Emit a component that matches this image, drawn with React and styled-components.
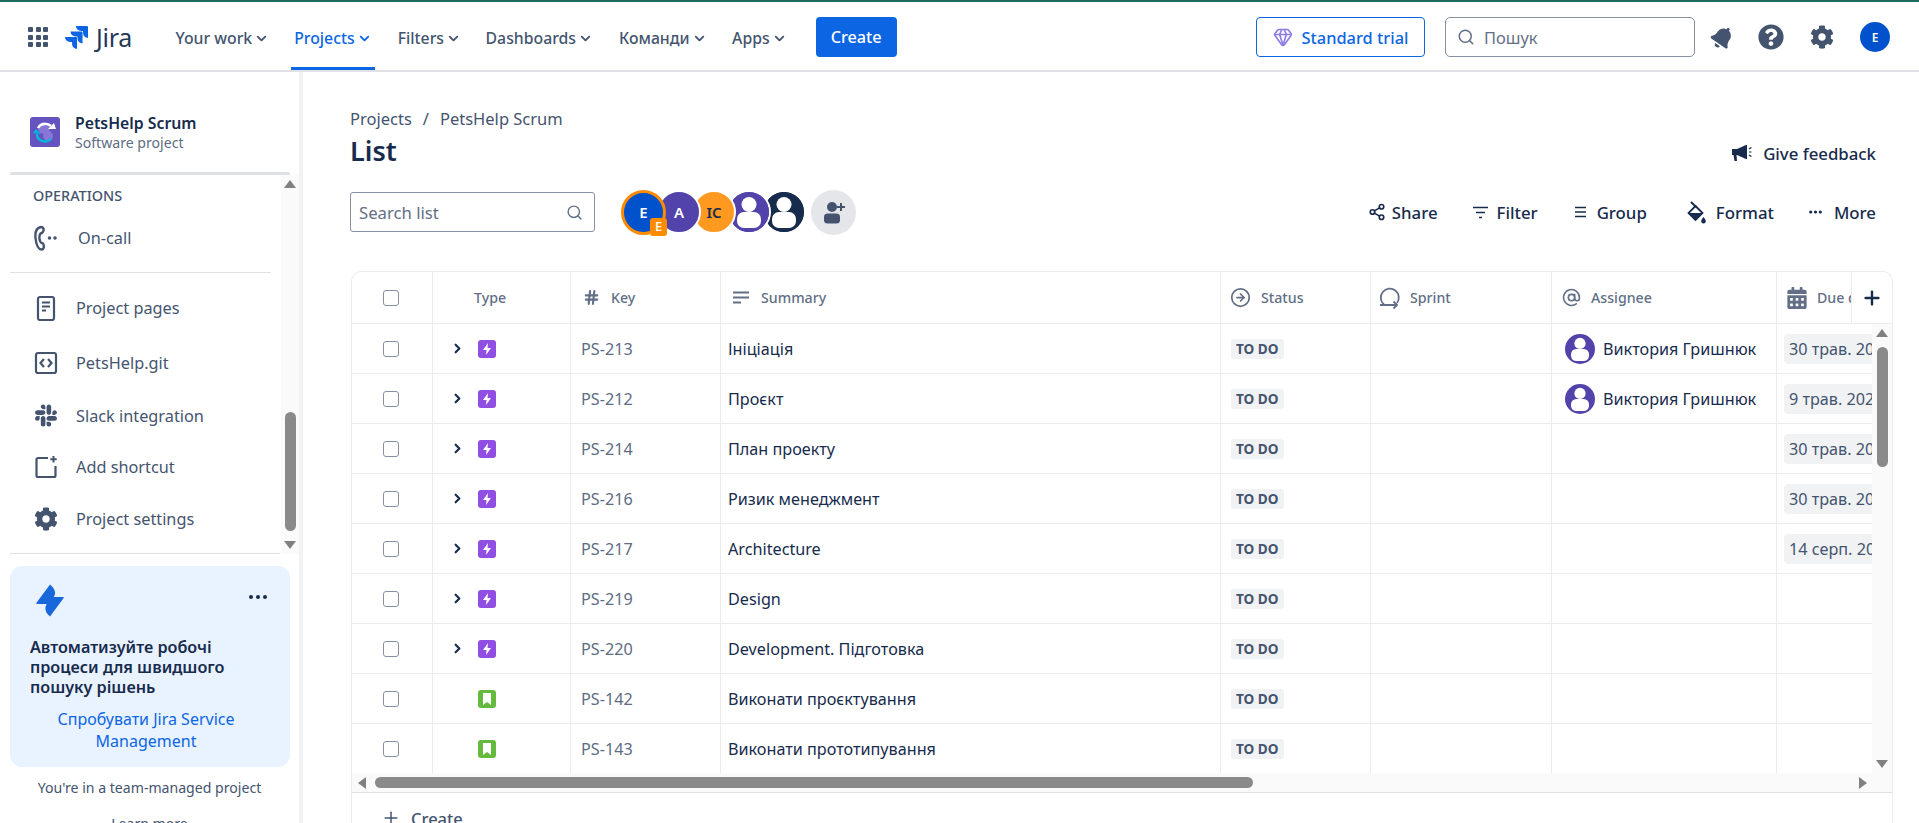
import React from 'react'
import styled, { createGlobalStyle } from 'styled-components'
import { Search, Plus, ChevronDown, ChevronRight, Share2, Hash, AtSign, CircleArrowRight, Gem } from 'lucide-react'
import { FaBell, FaQuestionCircle, FaCog, FaSlack, FaCalendarAlt } from 'react-icons/fa'
import { SiJira } from 'react-icons/si'

const GlobalStyle = createGlobalStyle`
  html, body {
    margin: 0;
    padding: 0;
    height: 100%;
    overflow: hidden;
    background: #fff;
  }
  * { box-sizing: border-box; }
  body {
    font-family: "Noto Sans", "Open Sans", sans-serif;
    font-size: 15px;
    color: #172b4d;
  }
`

const Page = styled.div`
  width: 1919px;
  height: 823px;
  overflow: hidden;
  display: flex;
  flex-direction: column;
  border-top: 2px solid #1f6b5e;
`

/* ---------- top bar ---------- */

const TopBar = styled.header`
  height: 70px;
  flex: none;
  display: flex;
  align-items: center;
  padding: 2px 0 0 28px;
  border-bottom: 2px solid #dfe1e6;
`

const AppGrid = styled.div`
  width: 20px;
  display: grid;
  grid-template-columns: repeat(3, 5px);
  gap: 2.5px;
  margin-right: 17px;
  span {
    height: 5px;
    background: #44546f;
    border-radius: 1px;
  }
`

const Logo = styled.div`
  display: flex;
  align-items: center;
  gap: 8px;
  width: 107.5px;
  color: #0c66e4;
  span {
    color: #253858;
    font-size: 25px;
    font-weight: 400;
    letter-spacing: -0.3px;
  }
`

const NavList = styled.nav`
  display: flex;
  align-self: flex-start;
  margin-top: -2px;
`

const NavItem = styled.div`
  display: flex;
  align-items: center;
  gap: 2px;
  height: 68px;
  padding: 7px 3px 0;
  margin-right: ${(p) => p.$gap}px;
  font-size: 15.8px;
  font-weight: 500;
  color: ${(p) => (p.$active ? '#0c66e4' : '#44546f')};
  border-bottom: 3px solid ${(p) => (p.$active ? '#0c66e4' : 'transparent')};
  svg { margin-top: 1px; }
`

const CreateButton = styled.button`
  width: 81px;
  height: 40px;
  margin-left: 26px;
  border: none;
  border-radius: 4px;
  background: #0c66e4;
  color: #fff;
  font: 500 16.2px "Noto Sans", sans-serif;
`

const TopRight = styled.div`
  margin-left: auto;
  display: flex;
  align-items: center;
  padding-right: 29px;
`

const TrialButton = styled.div`
  width: 169px;
  height: 40px;
  border: 1px solid #0c66e4;
  border-radius: 4px;
  display: flex;
  align-items: center;
  justify-content: center;
  gap: 9px;
  color: #0c66e4;
  font-size: 16.4px;
  font-weight: 500;
  svg { color: #8f7ee7; }
`

const TopSearch = styled.div`
  width: 250px;
  height: 40px;
  margin-left: 20px;
  border: 1px solid #8590a2;
  border-radius: 5px;
  display: flex;
  align-items: center;
  gap: 9px;
  padding-left: 11px;
  color: #626f86;
  font-size: 16.4px;
`

const TopIcons = styled.div`
  display: flex;
  align-items: center;
  color: #44546f;
  margin-left: 16px;
  gap: 26px;
`

const Bell = styled(FaBell)`
  transform: rotate(35deg);
  margin-right: -2px;
`

const UserDot = styled.div`
  width: 30px;
  height: 30px;
  border-radius: 50%;
  background: #0052cc;
  color: #fff;
  font-size: 12px;
  font-weight: 600;
  display: flex;
  align-items: center;
  justify-content: center;
`

/* ---------- body ---------- */

const Body = styled.div`
  flex: 1;
  display: flex;
  min-height: 0;
`

const Sidebar = styled.aside`
  width: 303px;
  flex: none;
  border-right: 4px solid #f1f2f4;
  display: flex;
  flex-direction: column;
  overflow: hidden;
`

const ProjectHead = styled.div`
  height: 100px;
  flex: none;
  padding: 45px 0 0 30px;
  display: flex;
  gap: 15px;
`

const ProjectTitle = styled.div`
  font-size: 15.8px;
  font-weight: 600;
  line-height: 20px;
  margin-top: -4px;
  color: #172b4d;
  small {
    display: block;
    font-size: 14.1px;
    font-weight: 400;
    line-height: 19px;
    color: #5e6c84;
  }
`

const TopRule = styled.div`
  height: 3px;
  flex: none;
  margin: 0 9px 0 10px;
  background: #dfe1e6;
  border-radius: 2px;
`

const ScrollArea = styled.div`
  height: 379px;
  flex: none;
  display: flex;
  margin-left: 10px;
`

const SideList = styled.div`
  flex: 1;
  margin-right: 10px;
`

const SectionLabel = styled.div`
  height: 40px;
  display: flex;
  align-items: center;
  padding-left: 23px;
  font-size: 14.4px;
  font-weight: 500;
  color: #44546f;
`

const SideItem = styled.div`
  height: ${(p) => p.$h}px;
  display: flex;
  align-items: center;
  padding-left: 24px;
  gap: ${(p) => p.$gap || 18}px;
  font-size: 16.3px;
  color: #44546f;
  svg { flex: none; width: 24px; }
`

const SideRule = styled.div`
  height: 1px;
  background: #dfe1e6;
  margin: 11px 0 7px;
`

const VScroll = styled.div`
  width: ${(p) => p.$w}px;
  flex: none;
  height: 100%;
  background: #fafafa;
  display: flex;
  flex-direction: column;
  align-items: center;
`

const VThumb = styled.div`
  width: 11px;
  height: ${(p) => p.$h}px;
  margin-top: ${(p) => p.$top}px;
  margin-bottom: auto;
  background: #8a8a8a;
  border-radius: 6px;
`

const ArrowUp = styled.div`
  flex: none;
  margin-top: ${(p) => p.$m || 5}px;
  width: 0;
  height: 0;
  border-left: 6px solid transparent;
  border-right: 6px solid transparent;
  border-bottom: 8px solid #808080;
`

const ArrowDown = styled.div`
  flex: none;
  margin-bottom: ${(p) => p.$m || 5}px;
  width: 0;
  height: 0;
  border-left: 6px solid transparent;
  border-right: 6px solid transparent;
  border-top: 8px solid #808080;
`

const SideBottomRule = styled.div`
  height: 1px;
  flex: none;
  background: #dfe1e6;
  margin: -1px 19px 12px 10px;
  position: relative;
`

const Promo = styled.div`
  height: 201px;
  flex: none;
  margin: 0 9px 0 10px;
  background: #e9f2ff;
  border-radius: 12px;
  padding: 18px 10px 0 20px;
`

const PromoTop = styled.div`
  display: flex;
  align-items: flex-start;
  justify-content: space-between;
  height: 53px;
  padding-left: 6px;
`

const PromoDots = styled.div`
  display: flex;
  gap: 3px;
  margin: 11px 13px 0 0;
  span {
    width: 4px;
    height: 4px;
    border-radius: 50%;
    background: #172b4d;
  }
`

const PromoHeading = styled.div`
  font-size: 16.2px;
  font-weight: 600;
  line-height: 20px;
  color: #172b4d;
  white-space: nowrap;
`

const PromoLink = styled.div`
  margin-top: 11px;
  padding-right: 18px;
  font-size: 16px;
  line-height: 22px;
  text-align: center;
  color: #0c66e4;
`

const TeamNote = styled.div`
  text-align: center;
  font-size: 14.1px;
  color: #44546f;
  margin: 11px 10px 0 10px;
  line-height: 20px;
  small {
    display: block;
    font-size: 14.1px;
    margin-top: 16px;
  }
`

/* ---------- main ---------- */

const Main = styled.main`
  flex: 1;
  min-width: 0;
  padding: 36px 26px 0 47px;
  display: flex;
  flex-direction: column;
`

const Crumbs = styled.div`
  height: 20px;
  flex: none;
  display: flex;
  align-items: center;
  gap: 11px;
  font-size: 16.5px;
  color: #44546f;
`

const TitleRow = styled.div`
  height: 36px;
  flex: none;
  margin-top: 7px;
  display: flex;
  align-items: center;
  justify-content: space-between;
  padding-right: 17px;
  h1 {
    margin: -6px 0 0;
    font-size: 27px;
    font-weight: 600;
    color: #172b4d;
  }
`

const Action = styled.div`
  display: flex;
  align-items: center;
  gap: ${(p) => p.$gap || 9}px;
  margin-left: ${(p) => p.$left || 0}px;
  font-size: 16.8px;
  font-weight: 500;
  color: #172b4d;
`

const Toolbar = styled.div`
  height: 46px;
  flex: none;
  margin-top: 18px;
  display: flex;
  align-items: center;
  padding-right: 17px;
`

const ListSearch = styled.div`
  width: 245px;
  height: 40px;
  border: 1px solid #8590a2;
  border-radius: 3px;
  display: flex;
  align-items: center;
  justify-content: space-between;
  padding: 0 11px 0 8px;
  font-size: 16.7px;
  color: #626f86;
`

const AvatarRow = styled.div`
  display: flex;
  align-items: center;
  margin-left: 26px;
`

const Avatar = styled.div`
  width: ${(p) => (p.$me ? 45 : 44)}px;
  height: ${(p) => (p.$me ? 45 : 44)}px;
  margin-left: ${(p) => (p.$me ? 0 : -9)}px;
  border-radius: 50%;
  border: ${(p) => (p.$me ? '3px solid #ff8b00' : '2px solid #fff')};
  background: ${(p) => p.$bg};
  color: ${(p) => p.$fg || '#fff'};
  z-index: ${(p) => p.$z};
  position: relative;
  display: flex;
  align-items: center;
  justify-content: center;
  overflow: ${(p) => (p.$me ? 'visible' : 'hidden')};
  font-size: 15px;
  font-weight: 600;
  line-height: 1;
`

const MeBadge = styled.span`
  position: absolute;
  right: -4px;
  bottom: -4px;
  width: 17px;
  height: 18px;
  border-radius: 3px;
  background: #ff8b00;
  color: #fff;
  font-size: 13px;
  font-weight: 500;
  display: flex;
  align-items: center;
  justify-content: center;
`

const AddPeople = styled.div`
  width: 45px;
  height: 45px;
  margin-left: 5px;
  border-radius: 50%;
  background: #e4e6ea;
  display: flex;
  align-items: center;
  justify-content: center;
`

const Actions = styled.div`
  margin-left: auto;
  display: flex;
  align-items: center;
`

/* ---------- table ---------- */

const columns = '81px 138px 150px 500px 150px 181px 225px 115px'

const Table = styled.div`
  margin-top: 36px;
  margin-left: 1px;
  width: 1542px;
  flex: none;
  border: 1px solid #ebecf0;
  border-bottom: none;
  border-radius: 10px 10px 0 0;
  display: flex;
  flex-direction: column;
`

const HeadRow = styled.div`
  height: 52px;
  flex: none;
  display: grid;
  grid-template-columns: ${columns};
  border-bottom: 1px solid #ebecf0;
  position: relative;
  overflow: hidden;
  border-radius: 10px 10px 0 0;
`

const HeadCell = styled.div`
  display: flex;
  align-items: center;
  gap: ${(p) => p.$gap || 10}px;
  padding-left: ${(p) => p.$pad}px;
  border-right: 1px solid #ebecf0;
  font-size: 14.2px;
  font-weight: 500;
  color: #626f86;
  white-space: nowrap;
  overflow: hidden;
  svg { flex: none; }
`

const AddColumn = styled.div`
  position: absolute;
  top: 0;
  right: 0;
  width: 41px;
  height: 51px;
  background: #fff;
  border-left: 1px solid #ebecf0;
  display: flex;
  align-items: center;
  justify-content: center;
  color: #172b4d;
`

const TableMiddle = styled.div`
  height: 449px;
  flex: none;
  display: flex;
`

const Rows = styled.div`
  flex: 1;
  min-width: 0;
  overflow: hidden;
`

const Row = styled.div`
  height: 50px;
  display: grid;
  grid-template-columns: ${columns};
  border-bottom: 1px solid #ebecf0;
`

const Cell = styled.div`
  display: flex;
  align-items: center;
  padding-left: ${(p) => p.$pad || 0}px;
  border-right: 1px solid #ebecf0;
  gap: ${(p) => p.$gap || 0}px;
  font-size: 16.2px;
  white-space: nowrap;
  overflow: hidden;
  color: ${(p) => p.$color || '#172b4d'};
`

const Check = styled.div`
  width: 16px;
  height: 16px;
  border: 1px solid #8590a2;
  border-radius: 3px;
  background: #fff;
`

const Expander = styled.div`
  width: 28px;
  flex: none;
  color: #172b4d;
  display: flex;
  align-items: center;
`

const TypeIcon = styled.div`
  width: 18px;
  height: 18px;
  border-radius: 3px;
  background: ${(p) => p.$bg};
  display: flex;
  align-items: center;
  justify-content: center;
`

const Lozenge = styled.span`
  height: 20px;
  padding: 0 5px;
  display: flex;
  align-items: center;
  border-radius: 3px;
  background: #f1f2f4;
  color: #44546f;
  font-size: 13.6px;
  font-weight: 700;
`

const DateChip = styled.span`
  height: 30px;
  min-width: 110px;
  padding: 0 5px;
  display: flex;
  align-items: center;
  border-radius: 4px;
  background: #f1f2f4;
  color: #44546f;
  font-size: 16.2px;
`

const HScroll = styled.div`
  height: 20px;
  flex: none;
  display: flex;
  align-items: center;
  background: #fafafa;
  border-bottom: 1px solid #dfe1e6;
  padding: 0 25px 0 0;
`

const HThumb = styled.div`
  width: 878px;
  height: 11px;
  margin-left: 9px;
  margin-right: auto;
  background: #8a8a8a;
  border-radius: 6px;
`

const ArrowLeft = styled.div`
  margin-left: 6px;
  width: 0;
  height: 0;
  border-top: 6px solid transparent;
  border-bottom: 6px solid transparent;
  border-right: 8px solid #808080;
`

const ArrowRight = styled.div`
  width: 0;
  height: 0;
  border-top: 6px solid transparent;
  border-bottom: 6px solid transparent;
  border-left: 8px solid #808080;
`

const CreateRow = styled.div`
  height: 50px;
  flex: none;
  display: flex;
  align-items: center;
  padding: 0 0 0 29px;
  gap: 10px;
  font-size: 16.5px;
  font-weight: 500;
  color: #44546f;
`

/* ---------- drawings ---------- */

const PersonMark = ({ size = 40, bg }) => (
  <svg width={size} height={size} viewBox="0 0 40 40">
    <circle cx="20" cy="20" r="20" fill={bg} />
    <ellipse cx="20" cy="12.5" rx="7.5" ry="7.5" fill="#fff" />
    <rect x="8" y="20" width="24" height="16" rx="7" fill="#fff" />
  </svg>
)

const ProjectIcon = () => (
  <svg width="30" height="30" viewBox="0 0 30 30">
    <rect width="30" height="30" rx="3" fill="#6554c0" />
    <circle cx="14" cy="11" r="6" fill="#8777d9" />
    <circle cx="18" cy="19" r="5" fill="#8777d9" />
    <path d="M8 11 A8 7 0 0 1 21 9" fill="none" stroke="#fff" strokeWidth="2.4" />
    <path d="M18 12 L26 12 L24 6 Z" fill="#fff" />
    <path d="M7 17 A8 7 0 0 0 21 22" fill="none" stroke="#00b8d9" strokeWidth="2.4" />
    <path d="M3 16 L11 17 L6 12 Z" fill="#00b8d9" />
  </svg>
)

const OnCallIcon = () => (
  <svg width="24" height="26" viewBox="0 0 24 26" fill="none" stroke="#44546f" strokeWidth="2.4">
    <path d="M7 2 C2 3 1 8 1.5 13 C2 18 3 24 7.5 24.5 C10 24.5 10.5 21 9 18.5 C7.5 18 6.5 18 6 16 C5 13 5.5 10 6.5 8.5 C8.5 8 10 6 9.5 3.5 C9 2.5 8 2 7 2 Z" />
    <circle cx="15.5" cy="13" r="1.8" fill="#44546f" stroke="none" />
    <circle cx="21" cy="13" r="1.8" fill="#44546f" stroke="none" />
  </svg>
)

const PagesIcon = () => (
  <svg width="24" height="26" viewBox="0 0 24 26" fill="none" stroke="#44546f">
    <rect x="4" y="2" width="16" height="23" rx="2" strokeWidth="2.2" />
    <path d="M8 7.5 H16 M8 11.5 H16 M8 15.5 H12" strokeWidth="2" />
  </svg>
)

const CodeIcon = () => (
  <svg width="24" height="24" viewBox="0 0 24 24" fill="none" stroke="#44546f">
    <rect x="2" y="2" width="20" height="20" rx="2" strokeWidth="2.2" />
    <path d="M10 8 L6.5 12 L10 16 M14 8 L17.5 12 L14 16" strokeWidth="2.2" />
  </svg>
)

const ShortcutIcon = () => (
  <svg width="24" height="24" viewBox="0 0 24 24" fill="none" stroke="#44546f" strokeWidth="2.2">
    <path d="M14 3 H4 A1.5 1.5 0 0 0 2.5 4.5 V20.5 A1.5 1.5 0 0 0 4 22 H20 A1.5 1.5 0 0 0 21.5 20.5 V11" />
    <path d="M19.5 1 V7.5 M16.3 4.2 H22.7" strokeWidth="2" />
  </svg>
)

const PromoLogo = () => (
  <svg width="28" height="33" viewBox="0 0 28 33" fill="#1868db">
    <path d="M0.3 19 L14 0.5 Q19.5 5 19 10 Q17.5 15.5 12 20 H1 Q0 20 0.3 19 Z" />
    <path d="M27.7 14 L14 32.5 Q8.5 28 9.5 23 Q11 17.5 16 13 H27 Q28 13 27.7 14 Z" />
  </svg>
)

const MegaphoneIcon = () => (
  <svg width="20" height="18" viewBox="0 0 20 18" fill="#172b4d">
    <path d="M0 5 H5 L14 1 H15 V15 H14 L5 11 H4.5 L5 17 H2.5 L1.5 11 H0 Z" />
    <path d="M17 5 L19.5 3.5 M17 8 H19.5 M17 11 L19.5 12.5" stroke="#172b4d" strokeWidth="1.2" fill="none" />
  </svg>
)

const FormatIcon = () => (
  <svg width="19" height="23" viewBox="0 0 19 23" fill="#172b4d">
    <path d="M8.5 5 L15.5 12 L8.5 19 L1.5 12 Z" fill="none" stroke="#172b4d" strokeWidth="1.8" />
    <path d="M1.5 12 H15.5 L8.5 19 Z" />
    <path d="M4 1 L9 6" fill="none" stroke="#172b4d" strokeWidth="2" />
    <path d="M16.5 16 C18 18 18.8 19 18.8 20.2 A2.3 2.3 0 0 1 14.2 20.2 C14.2 19 15 18 16.5 16 Z" />
  </svg>
)

const FilterIcon = () => (
  <svg width="15" height="13" viewBox="0 0 15 13" fill="none" stroke="#172b4d" strokeWidth="1.7">
    <path d="M0 1.5 H15 M3 6.5 H12 M6 11.5 H9" />
  </svg>
)

const GroupIcon = () => (
  <svg width="11" height="12" viewBox="0 0 11 12" fill="none" stroke="#172b4d" strokeWidth="1.7">
    <path d="M0 1.5 H11 M0 6 H11 M0 10.5 H11" />
  </svg>
)

const DotsIcon = ({ color = '#172b4d' }) => (
  <svg width="13" height="4" viewBox="0 0 13 4" fill={color}>
    <circle cx="1.7" cy="2" r="1.6" />
    <circle cx="6.5" cy="2" r="1.6" />
    <circle cx="11.3" cy="2" r="1.6" />
  </svg>
)

const SummaryIcon = () => (
  <svg width="16" height="13" viewBox="0 0 16 13" fill="none" stroke="#626f86" strokeWidth="2.2">
    <path d="M0 1.5 H16 M0 6.5 H16 M0 11.5 H8" />
  </svg>
)

const SprintIcon = () => (
  <svg width="23" height="24" viewBox="0 0 23 24" fill="none" stroke="#626f86" strokeWidth="1.8">
    <path d="M5 18.5 A9 9 0 1 1 18 17" />
    <path d="M1 19 H18" />
    <path d="M14.5 15.5 L18 19 L14.5 22.5" />
  </svg>
)

const AddPersonIcon = () => (
  <svg width="24" height="24" viewBox="0 0 24 24" fill="#44546f">
    <circle cx="10" cy="7" r="5" />
    <rect x="2" y="13.5" width="16" height="10" rx="3.5" />
    <path d="M18 3 H20 V6 H23 V8 H20 V11 H18 V8 H15 V6 H18 Z" />
  </svg>
)

const Bolt = () => (
  <svg width="10" height="12" viewBox="0 0 10 12" fill="#fff">
    <path d="M6 0 L1 7 H4.5 L4 12 L9 5 H5.5 Z" />
  </svg>
)

const Bookmark = () => (
  <svg width="10" height="12" viewBox="0 0 10 12" fill="#fff">
    <path d="M1 0 H9 V12 L5 9 L1 12 Z" />
  </svg>
)

const navItems = [
  { label: 'Your work', gap: 19 },
  { label: 'Projects', gap: 20, active: true },
  { label: 'Filters', gap: 18.5 },
  { label: 'Dashboards', gap: 20 },
  { label: 'Команди', gap: 19.5 },
  { label: 'Apps', gap: 0 },
]

const assignee = 'Виктория Гришнюк'

const rows = [
  { id: 'PS-213', title: 'Ініціація', who: assignee, due: '30 трав. 2024', epic: true },
  { id: 'PS-212', title: 'Проєкт', who: assignee, due: '9 трав. 2024', epic: true },
  { id: 'PS-214', title: 'План проекту', due: '30 трав. 2024', epic: true },
  { id: 'PS-216', title: 'Ризик менеджмент', due: '30 трав. 2024', epic: true },
  { id: 'PS-217', title: 'Architecture', due: '14 серп. 2024', epic: true },
  { id: 'PS-219', title: 'Design', epic: true },
  { id: 'PS-220', title: 'Development. Підготовка', epic: true },
  { id: 'PS-142', title: 'Виконати проєктування' },
  { id: 'PS-143', title: 'Виконати прототипування' },
]

const App = () => {
  return (
    <Page>
      <GlobalStyle />
      <TopBar>
        <AppGrid>
          {Array.from({ length: 9 }).map((_, i) => (
            <span key={i} />
          ))}
        </AppGrid>
        <Logo>
          <SiJira size={23} />
          <span>Jira</span>
        </Logo>
        <NavList>
          {navItems.map((item) => (
            <NavItem key={item.label} $active={item.active} $gap={item.gap}>
              {item.label}
              <ChevronDown size={15} strokeWidth={3} />
            </NavItem>
          ))}
        </NavList>
        <CreateButton>Create</CreateButton>
        <TopRight>
          <TrialButton>
            <Gem size={20} />
            Standard trial
          </TrialButton>
          <TopSearch>
            <Search size={18} />
            Пошук
          </TopSearch>
          <TopIcons>
            <Bell size={23} />
            <FaQuestionCircle size={26} />
            <FaCog size={24} />
            <UserDot>E</UserDot>
          </TopIcons>
        </TopRight>
      </TopBar>

      <Body>
        <Sidebar>
          <ProjectHead>
            <ProjectIcon />
            <ProjectTitle>
              PetsHelp Scrum
              <small>Software project</small>
            </ProjectTitle>
          </ProjectHead>
          <TopRule />
          <ScrollArea>
            <SideList>
              <SectionLabel>OPERATIONS</SectionLabel>
              <SideItem $h={46} $gap={20}>
                <OnCallIcon />
                On-call
              </SideItem>
              <SideRule />
              <SideItem $h={56}>
                <PagesIcon />
                Project pages
              </SideItem>
              <SideItem $h={54}>
                <CodeIcon />
                PetsHelp.git
              </SideItem>
              <SideItem $h={51}>
                <FaSlack size={25} color="#44546f" />
                Slack integration
              </SideItem>
              <SideItem $h={51}>
                <ShortcutIcon />
                Add shortcut
              </SideItem>
              <SideItem $h={54}>
                <FaCog size={24} color="#44546f" />
                Project settings
              </SideItem>
            </SideList>
            <VScroll $w={18}>
              <ArrowUp />
              <VThumb $h={119} $top={224} />
              <ArrowDown />
            </VScroll>
          </ScrollArea>
          <SideBottomRule />
          <Promo>
            <PromoTop>
              <PromoLogo />
              <PromoDots>
                <span />
                <span />
                <span />
              </PromoDots>
            </PromoTop>
            <PromoHeading>
              Автоматизуйте робочі
              <br />
              процеси для швидшого
              <br />
              пошуку рішень
            </PromoHeading>
            <PromoLink>
              Спробувати Jira Service
              <br />
              Management
            </PromoLink>
          </Promo>
          <TeamNote>
            You're in a team-managed project
            <small>Learn more</small>
          </TeamNote>
        </Sidebar>

        <Main>
          <Crumbs>
            <span>Projects</span>
            <span>/</span>
            <span>PetsHelp Scrum</span>
          </Crumbs>
          <TitleRow>
            <h1>List</h1>
            <Action $gap={11}>
              <MegaphoneIcon />
              Give feedback
            </Action>
          </TitleRow>
          <Toolbar>
            <ListSearch>
              Search list
              <Search size={17} />
            </ListSearch>
            <AvatarRow>
              <Avatar $me $bg="#0052cc" $z={6}>
                E<MeBadge>E</MeBadge>
              </Avatar>
              <Avatar $bg="#5243aa" $z={5}>
                A
              </Avatar>
              <Avatar $bg="#ff991f" $fg="#172b4d" $z={4}>
                IC
              </Avatar>
              <Avatar $bg="#5243aa" $z={3}>
                <PersonMark bg="#5243aa" />
              </Avatar>
              <Avatar $bg="#172b4d" $z={2}>
                <PersonMark bg="#172b4d" />
              </Avatar>
              <AddPeople>
                <AddPersonIcon />
              </AddPeople>
            </AvatarRow>
            <Actions>
              <Action $gap={6}>
                <Share2 size={18} strokeWidth={2.2} />
                Share
              </Action>
              <Action $left={35}>
                <FilterIcon />
                Filter
              </Action>
              <Action $left={37} $gap={11}>
                <GroupIcon />
                Group
              </Action>
              <Action $left={40} $gap={10}>
                <FormatIcon />
                Format
              </Action>
              <Action $left={35} $gap={12}>
                <DotsIcon />
                More
              </Action>
            </Actions>
          </Toolbar>

          <Table>
            <HeadRow>
              <HeadCell $pad={31}>
                <Check />
              </HeadCell>
              <HeadCell $pad={41}>Type</HeadCell>
              <HeadCell $pad={12} $gap={11}>
                <Hash size={17} strokeWidth={3} />
                Key
              </HeadCell>
              <HeadCell $pad={12} $gap={12}>
                <SummaryIcon />
                Summary
              </HeadCell>
              <HeadCell $pad={9} $gap={10}>
                <CircleArrowRight size={21} strokeWidth={2} />
                Status
              </HeadCell>
              <HeadCell $pad={8} $gap={8}>
                <SprintIcon />
                Sprint
              </HeadCell>
              <HeadCell $pad={10} $gap={10}>
                <AtSign size={19} />
                Assignee
              </HeadCell>
              <HeadCell $pad={9} $gap={9}>
                <FaCalendarAlt size={22} />
                Due date
              </HeadCell>
              <AddColumn>
                <Plus size={22} strokeWidth={2.6} />
              </AddColumn>
            </HeadRow>
            <TableMiddle>
              <Rows>
                {rows.map((row) => (
                  <Row key={row.id}>
                    <Cell $pad={31}>
                      <Check />
                    </Cell>
                    <Cell $pad={17}>
                      <Expander>{row.epic && <ChevronRight size={15} strokeWidth={3.4} />}</Expander>
                      {row.epic ? (
                        <TypeIcon $bg="#904ee2">
                          <Bolt />
                        </TypeIcon>
                      ) : (
                        <TypeIcon $bg="#63ba3c">
                          <Bookmark />
                        </TypeIcon>
                      )}
                    </Cell>
                    <Cell $pad={10} $color="#5e6c84">
                      {row.id}
                    </Cell>
                    <Cell $pad={7}>{row.title}</Cell>
                    <Cell $pad={10}>
                      <Lozenge>TO DO</Lozenge>
                    </Cell>
                    <Cell />
                    <Cell $pad={13} $gap={8}>
                      {row.who && <PersonMark size={30} bg="#5243aa" />}
                      {row.who}
                    </Cell>
                    <Cell $pad={7}>{row.due && <DateChip>{row.due}</DateChip>}</Cell>
                  </Row>
                ))}
              </Rows>
              <VScroll $w={20}>
                <ArrowUp />
                <VThumb $h={120} $top={10} />
                <ArrowDown />
              </VScroll>
            </TableMiddle>
            <HScroll>
              <ArrowLeft />
              <HThumb />
              <ArrowRight />
            </HScroll>
            <CreateRow>
              <Plus size={20} strokeWidth={1.8} />
              Create
            </CreateRow>
          </Table>
        </Main>
      </Body>
    </Page>
  )
}

export default App
